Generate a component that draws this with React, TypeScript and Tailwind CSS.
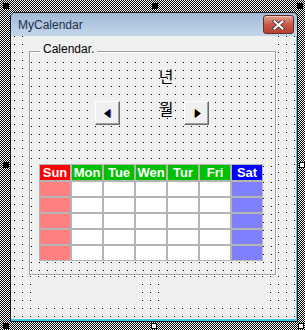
const days = [
  { name: "Sun", head: "bg-[#ff0000]", cell: "bg-[#ff8080]" },
  { name: "Mon", head: "bg-[#00c000]", cell: "bg-white" },
  { name: "Tue", head: "bg-[#00c000]", cell: "bg-white" },
  { name: "Wen", head: "bg-[#00c000]", cell: "bg-white" },
  { name: "Tur", head: "bg-[#00c000]", cell: "bg-white" },
  { name: "Fri", head: "bg-[#00c000]", cell: "bg-white" },
  { name: "Sat", head: "bg-[#0000ff]", cell: "bg-[#8080ff]" },
];

// designer selection handles around the form
const handles = [
  { pos: "left-[3px] top-[3px]", black: true },
  { pos: "left-[152px] top-[3px]", black: true },
  { pos: "left-[297px] top-[3px]", black: true },
  { pos: "left-[3px] top-[162px]", black: true },
  { pos: "left-[299px] top-[162px]", black: false },
  { pos: "left-[3px] top-[323px]", black: true },
  { pos: "left-[151px] top-[323px]", black: false },
  { pos: "left-[298px] top-[323px]", black: false },
];

function CloseButton() {
  return (
    <div className="flex h-[19px] w-[31px] items-center justify-center rounded-[3px] border border-[#6b2a24] bg-gradient-to-b from-[#e4a394] via-[#c9584a] to-[#b8402f] shadow-[inset_0_1px_0_#f0c4b8]">
      <svg width="13" height="10" viewBox="0 0 13 10">
        <path d="M2.5 1.5 L10.5 8.5 M10.5 1.5 L2.5 8.5" stroke="#3b3b3b" strokeWidth="3.6" strokeLinecap="square" />
        <path d="M2.5 1.5 L10.5 8.5 M10.5 1.5 L2.5 8.5" stroke="#ffffff" strokeWidth="2" strokeLinecap="square" />
      </svg>
    </div>
  );
}

function ArrowButton({ dir }: { dir: "left" | "right" }) {
  return (
    <div className="flex h-[24px] w-[25px] items-center justify-center border border-t-white border-l-white border-r-[#696969] border-b-[#696969] bg-[#f0f0f0] shadow-[inset_-1px_-1px_0_#a0a0a0]">
      {dir === "left" ? (
        <svg width="8" height="9" viewBox="0 0 8 9">
          <polygon points="0,4.5 6,0 6,9" fill="#000" />
          <rect x="6" y="0.5" width="1.2" height="8" fill="#2f5fd8" />
        </svg>
      ) : (
        <svg width="8" height="9" viewBox="0 0 8 9">
          <rect x="0.8" y="0.5" width="1.2" height="8" fill="#e2a04a" />
          <polygon points="2,0 8,4.5 2,9" fill="#000" />
        </svg>
      )}
    </div>
  );
}

export default function App() {
  return (
    <div className="relative h-[330px] w-[305px] overflow-hidden bg-[repeating-conic-gradient(#000_0_25%,#fff_0_50%)] bg-[length:2px_2px] pl-[10px] pt-[12px] font-['Liberation_Sans',Arial,sans-serif]">
      <div className="flex h-[310px] w-[288px] flex-col overflow-hidden rounded-t-[5px] border border-[#1a1a1a]">
        <div className="flex h-[23px] shrink-0 items-center justify-between bg-gradient-to-b from-[#a2bad7] to-[#c3d6eb] pl-[7px] pr-[3px]">
          <span className="text-[12px] leading-[14px] text-[#1c2f50]">MyCalendar</span>
          <CloseButton />
        </div>

        <div className="flex-1 border-r border-b-2 border-[#3cc8ec] bg-[#f0f0f0] bg-[conic-gradient(at_1px_1px,transparent_75%,#000_0)] bg-[length:8px_8px] bg-[position:3px_0px]">
          {/* Frame "Calendar." */}
          <div className="ml-[18px] h-[239px] w-[247px] bg-[#f0f0f0] pt-[15px]">
            <div className="relative h-[224px] border border-[#a0a0a0] bg-[conic-gradient(at_1px_1px,transparent_75%,#000_0)] bg-[length:8px_8px] bg-[position:1px_2px] bg-clip-content bg-origin-content pt-[8px] shadow-[inset_1px_1px_0_#fff,1px_1px_0_#fff]">
              <span className="absolute left-[10px] top-[-10px] bg-[#f0f0f0] px-[3px] text-[12px] leading-[14px] text-black">
                Calendar.
              </span>

              <div className="ml-[128px] mt-[6px] h-[20px] w-[16px] text-center font-['Noto_Sans_CJK_KR',sans-serif] text-[16px] leading-[20px] text-black">
                년
              </div>

              <div className="mt-[15px] flex items-start">
                <div className="ml-[65px]">
                  <ArrowButton dir="left" />
                </div>
                <div className="-mt-[3px] ml-[38px] h-[20px] w-[16px] text-center font-['Noto_Sans_CJK_KR',sans-serif] text-[16px] leading-[20px] text-black">
                  월
                </div>
                <div className="ml-[10px]">
                  <ArrowButton dir="right" />
                </div>
              </div>

              <div className="ml-[9px] mt-[39px] grid w-fit grid-cols-[repeat(7,30px)] grid-rows-[15px_repeat(5,14px)] gap-[2px] bg-[#b4b4b4] p-[1px]">
                {days.map((d) => (
                  <div
                    key={d.name}
                    className={`${d.head} flex items-center justify-center text-[13px] font-bold leading-[15px] text-white`}
                  >
                    {d.name}
                  </div>
                ))}
                {[0, 1, 2, 3, 4].map((r) =>
                  days.map((d) => <div key={`${r}-${d.name}`} className={d.cell} />)
                )}
              </div>
            </div>
          </div>

          {/* two borderless controls below the frame */}
          <div className="ml-[22px] mt-[5px] flex gap-[24px]">
            <div className="h-[24px] w-[104px] bg-[#f0f0f0]" />
            <div className="h-[24px] w-[104px] bg-[#f0f0f0]" />
          </div>
        </div>
      </div>

      {handles.map((h, i) => (
        <div
          key={i}
          className={`absolute ${h.pos} h-[6px] w-[6px] ${h.black ? "bg-black" : "border border-black bg-white"}`}
        />
      ))}
    </div>
  );
}
